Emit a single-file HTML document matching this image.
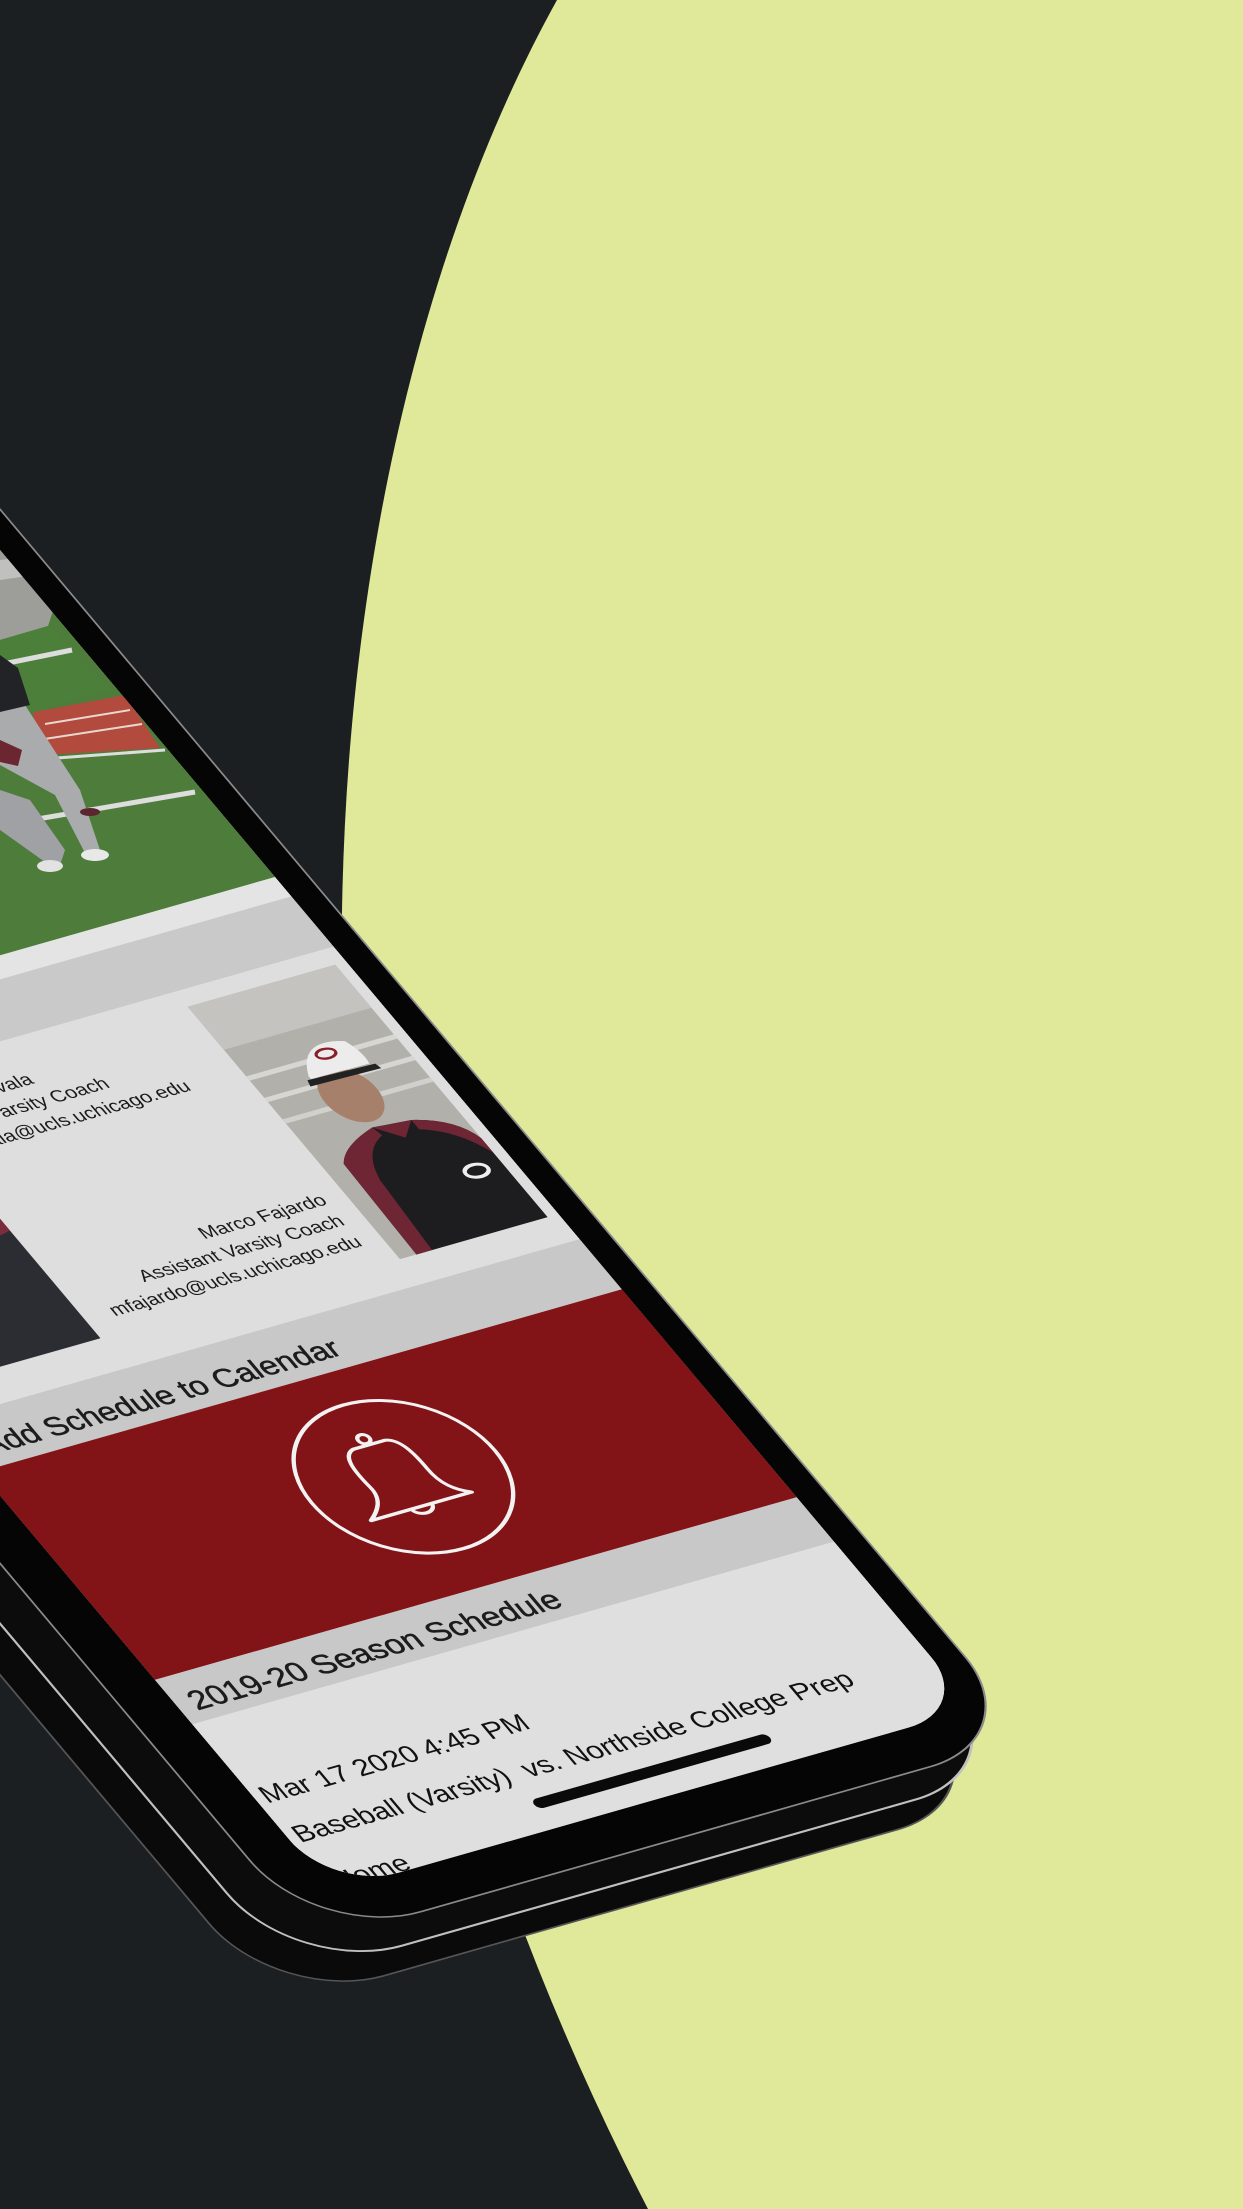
<!DOCTYPE html>
<html><head><meta charset="utf-8"><style>
html,body{margin:0;padding:0;background:#1b1f22}
svg{display:block}
text{font-family:"Liberation Sans",sans-serif}
</style></head><body>
<svg width="1243" height="2209" viewBox="0 0 1243 2209" xmlns="http://www.w3.org/2000/svg">
<defs>
<clipPath id="scr"><rect transform="matrix(0.917,-0.261,0.603,0.717,-20,1472)" x="0" y="-2400" width="700" height="2985" rx="72"/></clipPath>
<clipPath id="ph"><rect transform="matrix(0.917,-0.261,0.603,0.717,-20,1472)" x="0" y="-2400" width="700" height="1825"/></clipPath>
</defs>
<rect width="1243" height="2209" fill="#1b1f22"/>
<path d="M557,0 C280,500 230,1400 648,2209 L1243,2209 L1243,0 Z" fill="#e0e99a"/>

<!-- phone side / thickness -->
<rect transform="translate(-36,62) matrix(0.917,-0.261,0.603,0.717,-20,1472)" x="-55" y="-2400" width="790" height="3038" rx="115" fill="#0a0a0b" stroke="#555" stroke-width="2"/>
<rect transform="translate(-18,32) matrix(0.917,-0.261,0.603,0.717,-20,1472)" x="-55" y="-2400" width="790" height="3038" rx="115" fill="#0c0c0d" stroke="#c0c0c0" stroke-width="2.5"/>
<!-- front face -->
<rect transform="matrix(0.917,-0.261,0.603,0.717,-20,1472)" x="-50" y="-2400" width="780" height="3036" rx="112" fill="#050505" stroke="#8a8a8a" stroke-width="2"/>

<!-- screen -->
<g clip-path="url(#scr)">
<g transform="matrix(0.917,-0.261,0.603,0.717,-20,1472)">
<rect x="0" y="-2400" width="700" height="3000" fill="#dfdfdf"/>
<rect x="0" y="-2400" width="700" height="1825" fill="#4e7d3b"/>
<rect x="0" y="-575" width="700" height="27" fill="#e4e4e4"/>
<rect x="0" y="-548" width="700" height="70" fill="#c9c9c9"/>
<rect x="0" y="-478" width="700" height="408" fill="#dedede"/>
<rect x="0" y="-70" width="700" height="70" fill="#c8c8c8"/>
<rect x="0" y="0" width="700" height="290" fill="#821317"/>
<rect x="0" y="290" width="700" height="62" fill="#c8c8c8"/>
<rect x="0" y="352" width="700" height="250" fill="#dfdfdf"/>

<!-- right coach photo -->
<rect x="527" y="-457" width="161" height="352" fill="#b1b0ab"/>
<rect x="527" y="-457" width="161" height="60" fill="#c4c3bf"/>
<rect x="527" y="-360" width="161" height="6" fill="#d6d6d3"/>
<rect x="527" y="-330" width="161" height="6" fill="#d6d6d3"/>
<rect x="527" y="-300" width="161" height="6" fill="#d0d0cd"/>
<path d="M545,-105 L548,-230 Q560,-250 600,-262 L640,-258 Q680,-245 688,-215 L688,-105 Z" fill="#1d1d20"/>
<path d="M548,-230 Q560,-250 600,-262 L603,-250 Q575,-238 568,-200 L562,-105 L545,-105 Z" fill="#6e2634"/>
<path d="M640,-258 Q680,-245 688,-215 L688,-195 Q672,-232 640,-245 Z" fill="#6e2634"/>
<path d="M600,-262 L640,-258 L622,-240 Z" fill="#6e2634"/>
<ellipse cx="660" cy="-180" rx="12" ry="8" fill="none" stroke="#eee" stroke-width="4"/>
<ellipse cx="605" cy="-305" rx="28" ry="36" fill="#a7806b"/>
<path d="M582,-340 Q600,-385 640,-368 Q648,-350 645,-335 L582,-336 Z" fill="#ececec"/>
<path d="M578,-336 L650,-333 L652,-326 L576,-328 Z" fill="#222"/>
<ellipse cx="614" cy="-360" rx="10" ry="6" fill="none" stroke="#8a1e2a" stroke-width="3"/>

<!-- left coach photo -->
<rect x="40" y="-292" width="165" height="180" fill="#2b2d33"/>
<path d="M40,-292 L205,-292 L205,-262 Q140,-250 40,-230 Z" fill="#7b2c3d"/>
<path d="M40,-292 L120,-292 L40,-262 Z" fill="#5f8c45"/>
<ellipse cx="120" cy="-190" rx="14" ry="9" fill="none" stroke="#eee" stroke-width="5"/>

<!-- coach texts -->
<g font-size="21" fill="#1a1a1a">
<text x="215" y="-420">Jorge Zavala</text>
<text x="215" y="-391">Head Varsity Coach</text>
<text x="215" y="-362">jzavala@ucls.uchicago.edu</text>
<text x="505" y="-190" text-anchor="end">Marco Fajardo</text>
<text x="505" y="-161" text-anchor="end">Assistant Varsity Coach</text>
<text x="505" y="-132" text-anchor="end">mfajardo@ucls.uchicago.edu</text>
</g>

<text x="22" y="-16" font-size="33" fill="#1c1c1c" stroke="#1c1c1c" stroke-width="0.6">Add Schedule to Calendar</text>

<!-- bell -->
<circle cx="369" cy="141" r="100" fill="none" stroke="#f2f2f2" stroke-width="4"/>
<g fill="none" stroke="#f2f2f2" stroke-width="4" stroke-linejoin="round">
<circle cx="362" cy="86" r="6"/>
<path d="M345,94 C330,98 330,120 332,142 C334,160 320,172 308,180 L418,180 C404,172 396,160 396,140 C396,118 394,97 380,94 Z"/>
<path d="M352,180 a11,9 0 0 0 22,0"/>
</g>

<text x="15" y="338" font-size="34" fill="#1c1c1c" stroke="#1c1c1c" stroke-width="0.6">2019-20 Season Schedule</text>
<g font-size="30" fill="#111">
<text x="8" y="465">Mar 17 2020 4:45 PM</text>
<text x="8" y="520" xml:space="preserve">Baseball (Varsity)  vs. Northside College Prep</text>
<text x="8" y="585">Home</text>
</g>
<line x1="248" y1="552" x2="492" y2="552" stroke="#0a0a0a" stroke-width="13" stroke-linecap="round"/>
</g>
</g>

<!-- team photo details (page coords) -->
<g clip-path="url(#ph)">
<polygon points="0,500 90,500 48,626 0,640" fill="#9d9d99"/>
<polygon points="0,560 40,555 35,575 0,580" fill="#c0c0bc"/>
<polygon points="0,640 48,626 110,690 0,720" fill="#4c803a"/>
<line x1="8" y1="663" x2="72" y2="650" stroke="#ddd" stroke-width="5"/>
<polygon points="34,712 125,695 160,748 28,756" fill="#b24a3e"/>
<line x1="45" y1="724" x2="130" y2="710" stroke="#e8d8d0" stroke-width="2"/>
<line x1="38" y1="740" x2="142" y2="724" stroke="#e8d8d0" stroke-width="2"/>
<line x1="30" y1="760" x2="165" y2="750" stroke="#ddd" stroke-width="3"/>
<line x1="20" y1="822" x2="195" y2="792" stroke="#ddd" stroke-width="5"/>
<polygon points="0,700 25,705 80,790 100,850 85,853 55,795 0,765" fill="#a9abad"/>
<polygon points="0,790 30,800 65,850 60,865 45,862 0,830" fill="#9fa1a4"/>
<ellipse cx="95" cy="855" rx="14" ry="6" fill="#e8e8e8"/>
<ellipse cx="50" cy="866" rx="13" ry="6" fill="#e2e2e2"/>
<ellipse cx="90" cy="812" rx="10" ry="4" fill="#5a2630"/>
<polygon points="0,655 18,668 30,705 0,712" fill="#222326"/>
<polygon points="0,740 22,750 18,766 0,762" fill="#6b2631"/>
</g>
</svg>
</body></html>
